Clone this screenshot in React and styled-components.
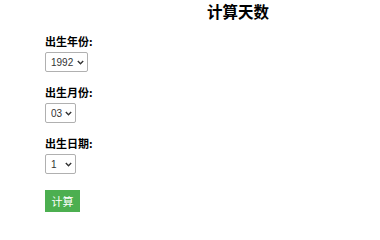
import React from "react";
import styled, { createGlobalStyle } from "styled-components";

const Global = createGlobalStyle`
  html, body { margin: 0; padding: 0; background: #fff; overflow: hidden; }
  body { font-family: "Noto Sans CJK SC", "Liberation Sans", sans-serif; color: #000; }
`;

const chevron =
  "data:image/svg+xml;utf8," +
  encodeURIComponent(
    '<svg xmlns="http://www.w3.org/2000/svg" width="7" height="5" viewBox="0 0 7 5"><path d="M0.8 1 L3.5 3.7 L6.2 1" fill="none" stroke="#333" stroke-width="1.4"/></svg>'
  );

const Page = styled.div`
  width: 380px;
  height: 220px;
  padding: 3px 0 0 45px;
  box-sizing: border-box;
`;

const Title = styled.h2`
  margin: 0 0 15px 0;
  padding-left: 162px;
  font-size: 15.5px;
  font-weight: 700;
  line-height: 16px;
  font-family: "Noto Sans CJK SC", sans-serif;
`;

const Field = styled.div`
  display: flex;
  flex-direction: column;
  align-items: flex-start;
  margin-bottom: 13px;
`;

const Label = styled.label`
  font-size: 11px;
  font-weight: 700;
  line-height: 14px;
  margin-bottom: 4px;
  font-family: "Noto Sans CJK SC", sans-serif;
`;

const Select = styled.select`
  appearance: none;
  -webkit-appearance: none;
  box-sizing: border-box;
  width: ${(p) => p.$w}px;
  height: 20px;
  font-family: "Liberation Sans", Arial, sans-serif;
  font-size: 10px;
  color: #333;
  background: #fff url("${chevron}") no-repeat right 3px center;
  border: 1px solid #b0b0b0;
  border-radius: 2px;
  padding: 0 10px 0 5px;
  outline: none;
`;

const Button = styled.button`
  width: 35px;
  height: 22px;
  border: none;
  background: #4caf50;
  color: #fff;
  font-family: "Noto Sans CJK SC", sans-serif;
  font-size: 11px;
  padding: 0;
`;

const years = Array.from({ length: 100 }, (_, i) => 1950 + i);
const months = Array.from({ length: 12 }, (_, i) => String(i + 1).padStart(2, "0"));
const days = Array.from({ length: 31 }, (_, i) => i + 1);

export default function App() {
  return (
    <>
      <Global />
      <Page>
        <Title>计算天数</Title>
        <Field>
          <Label>出生年份:</Label>
          <Select $w={43} defaultValue={1992}>
            {years.map((y) => (
              <option key={y} value={y}>{y}</option>
            ))}
          </Select>
        </Field>
        <Field>
          <Label>出生月份:</Label>
          <Select $w={31} defaultValue="03">
            {months.map((m) => (
              <option key={m} value={m}>{m}</option>
            ))}
          </Select>
        </Field>
        <Field>
          <Label>出生日期:</Label>
          <Select $w={31} defaultValue={1}>
            {days.map((d) => (
              <option key={d} value={d}>{d}</option>
            ))}
          </Select>
        </Field>
        <Button>计算</Button>
      </Page>
    </>
  );
}
